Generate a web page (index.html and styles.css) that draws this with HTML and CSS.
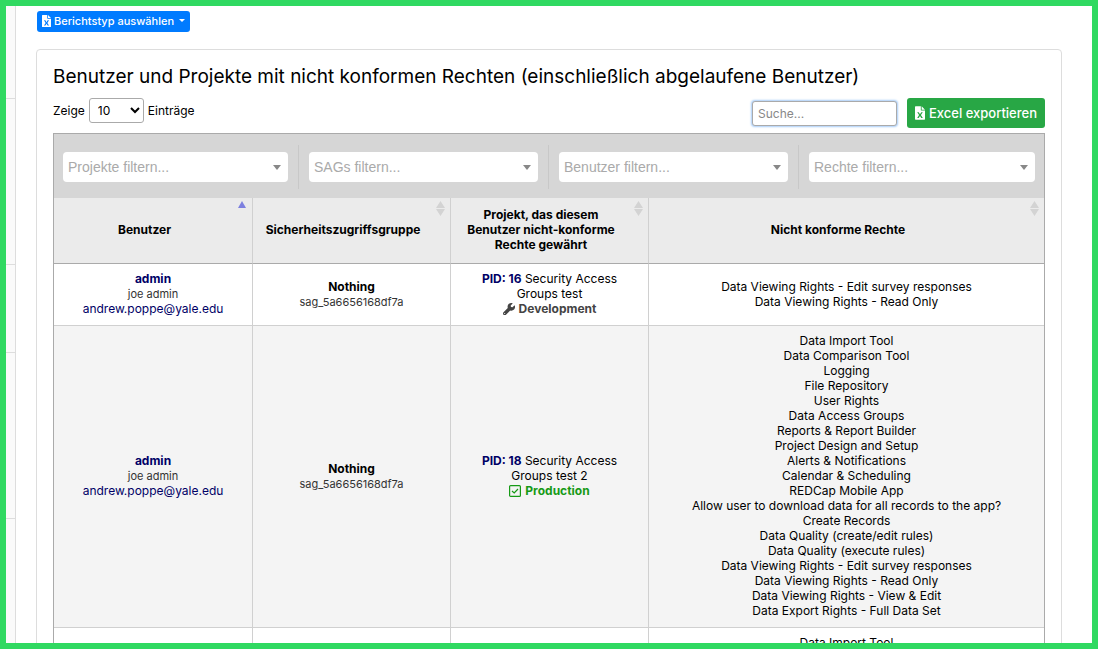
FILE: index.html
```html
<!DOCTYPE html>
<html lang="de">
<head>
<meta charset="utf-8">
<title>Benutzer und Projekte mit nicht konformen Rechten</title>
<link rel="stylesheet" href="styles.css">
</head>
<body>
<svg class="defs" width="0" height="0" aria-hidden="true">
  <symbol id="excel" viewBox="0 0 384 512"><path fill="currentColor" fill-rule="evenodd" d="M0 24Q0 0 24 0H224V136Q224 160 248 160H384V488Q384 512 360 512H24Q0 512 0 488ZM256 0L384 128H256ZM84 224L156 336L84 448H144L192 368L240 448H300L228 336L300 224H240L192 304L144 224Z"/></symbol>
  <symbol id="sort" viewBox="0 0 9 15"><path fill="currentColor" d="M4.500 0L9 7H0ZM0 8H9L4.500 15Z"/></symbol>
</svg>
<aside class="rail"><div class="rail-short"></div><div class="rail-tall"></div><div class="rail-mid"></div><div class="rail-tall"></div></aside>
<main class="main">
  <button type="button" class="btn btn-primary"><svg class="file-icon"><use href="#excel"/></svg><span>Berichtstyp auswählen</span><i class="caret"></i></button>
  <section class="card">
    <h1>Benutzer und Projekte mit nicht konformen Rechten (einschließlich abgelaufene Benutzer)</h1>
    <div class="tools">
      <label class="length">Zeige <select><option>10</option><option>25</option></select> Einträge</label>
      <div class="actions">
        <input type="search" class="search" placeholder="Suche..." aria-label="Suche">
        <button type="button" class="btn btn-success"><svg class="file-icon"><use href="#excel"/></svg><span>Excel exportieren</span></button>
      </div>
    </div>
    <div class="report">
      <div class="filters">
        <div class="filter"><select aria-label="Projekte filtern"><option>Projekte filtern...</option></select></div>
        <div class="filter"><select aria-label="SAGs filtern"><option>SAGs filtern...</option></select></div>
        <div class="filter"><select aria-label="Benutzer filtern"><option>Benutzer filtern...</option></select></div>
        <div class="filter"><select aria-label="Rechte filtern"><option>Rechte filtern...</option></select></div>
      </div>
      <table>
        <thead>
          <tr>
            <th>Benutzer<i class="sort-up"></i></th>
            <th>Sicherheitszugriffsgruppe<svg class="sort"><use href="#sort"/></svg></th>
            <th>Projekt, das diesem Benutzer nicht-konforme Rechte gewährt<svg class="sort"><use href="#sort"/></svg></th>
            <th class="wide">Nicht konforme Rechte<svg class="sort"><use href="#sort"/></svg></th>
          </tr>
        </thead>
        <tbody>
          <tr>
            <td><a href="#" class="strong">admin</a><br><small>joe admin</small><br><a href="#">andrew.poppe@yale.edu</a></td>
            <td><strong>Nothing</strong><br><small>sag_5a6656168df7a</small></td>
            <td class="project"><a href="#" class="strong">PID: 16</a> Security Access Groups test<br><span class="status dev"><svg viewBox="0 0 512 512"><path fill="currentColor" fill-rule="evenodd" d="M507 118C504 106 490 102 481 111L407 185L339 173L328 105L402 31C411 22 407 8 394 5C341-8 282 6 241 47C197 91 184 156 203 212L22 393C-7 422-7 469 22 498C51 527 98 527 127 498L307 318C362 338 425 326 471 280C516 235 520 171 507 118ZM72 472A24 24 0 1 1 72 424A24 24 0 1 1 72 472Z"/></svg>Development</span></td>
            <td>Data Viewing Rights - Edit survey responses<br>Data Viewing Rights - Read Only</td>
          </tr>
          <tr>
            <td><a href="#" class="strong">admin</a><br><small>joe admin</small><br><a href="#">andrew.poppe@yale.edu</a></td>
            <td><strong>Nothing</strong><br><small>sag_5a6656168df7a</small></td>
            <td class="project"><a href="#" class="strong">PID: 18</a> Security Access Groups test 2<br><span class="status prod"><svg viewBox="0 0 12 12"><rect x=".6" y=".6" width="10.800" height="10.800" rx="1" fill="none" stroke="currentColor" stroke-width="1.200"/><path d="M3 6L5.200 8L9 4" fill="none" stroke="currentColor" stroke-width="1.200"/></svg>Production</span></td>
            <td>Data Import Tool<br>Data Comparison Tool<br>Logging<br>File Repository<br>User Rights<br>Data Access Groups<br>Reports &amp; Report Builder<br>Project Design and Setup<br>Alerts &amp; Notifications<br>Calendar &amp; Scheduling<br>REDCap Mobile App<br>Allow user to download data for all records to the app?<br>Create Records<br>Data Quality (create/edit rules)<br>Data Quality (execute rules)<br>Data Viewing Rights - Edit survey responses<br>Data Viewing Rights - Read Only<br>Data Viewing Rights - View &amp; Edit<br>Data Export Rights - Full Data Set</td>
          </tr>
          <tr><td></td><td></td><td></td><td>Data Import Tool</td></tr>
        </tbody>
      </table>
    </div>
  </section>
</main>
</body>
</html>
```
FILE: styles.css
```css
* { box-sizing: border-box; }
body {
  margin: 0;
  height: 100vh;
  overflow: hidden;
  border: 6px solid #30d961;
  display: flex;
  background: #fff;
  color: #000;
  font: 12px/15px Inter, "Noto Sans", sans-serif;
}
.defs { position: absolute; }
.rail { flex: none; width: 10px; background: #fafafa; border-right: 1px solid #ddd; }
.rail div { border-bottom: 1px solid #ddd; }
.rail-short { height: 93px; }
.rail-tall { height: 166px; }
.rail-mid { height: 88px; }
.main { flex: 1; min-width: 0; padding: 5px 30px 0 20px; }
.btn {
  display: inline-flex;
  align-items: center;
  gap: 3px;
  border: 1px solid transparent;
  border-radius: 3px;
  color: #fff;
  font-family: inherit;
  font-weight: 500;
  white-space: nowrap;
}
.btn-primary { display: flex; margin-left: 1px; height: 21px; padding: 0 4px 2px; background: #007bff; font-size: 11px; }
.btn-success { height: 30px; padding: 0 7px 1px; gap: 4px; background: #28a745; font-size: 13px; }
.file-icon { width: 9px; height: 12px; }
.btn-success .file-icon { width: 10px; height: 14px; }
.caret { margin-left: 2px; border: 3px solid transparent; border-top-color: #fff; border-bottom: 0; }
.card { margin-top: 17px; padding: 16px; border: 1px solid #ddd; border-radius: 4px; }
h1 { margin: 0; font-size: 19px; line-height: 22px; font-weight: 400; }
.tools { display: flex; justify-content: space-between; margin-top: 10px; height: 35px; }
.length { display: flex; align-items: center; gap: 4px; height: 25px; }
.length select {
  width: 55px;
  height: 25px;
  padding: 0 4px;
  border: 1px solid #aaa;
  border-radius: 3px;
  background: #fff;
  font: inherit;
}
.actions { display: flex; align-items: center; gap: 10px; height: 30px; }
.search {
  width: 145px;
  height: 25px;
  padding: 0 5px;
  border: 1px solid #aaa;
  border-radius: 3px;
  box-shadow: 0 0 2px 1px #a8cdf8;
  background: #fff;
  font: inherit;
}
.search::placeholder { color: #888; }
.report { border: 1px solid #aaa; }
.filters { display: flex; height: 64px; padding: 11px 9px 9px; background: #d6d6d6; }
.filter {
  position: relative;
  flex: 229 1 0;
  display: flex;
  align-items: center;
  height: 44px;
  padding: 0 10px;
  border-right: 1px solid #c8c8c8;
}
.filter:first-child { flex-grow: 225; padding-left: 0; }
.filter:last-child { flex-grow: 226; padding-right: 0; border-right: 0; }
.filter select {
  appearance: none;
  width: 100%;
  height: 30px;
  padding: 0 5px;
  border: 0;
  border-radius: 4px;
  background: #fff;
  color: #aaa;
  font: 14px "Liberation Sans", Arial, sans-serif;
}
.filter::after {
  content: "";
  position: absolute;
  right: 17px;
  border: 4px solid transparent;
  border-top: 5px solid #888;
  border-bottom: 0;
  pointer-events: none;
}
.filter:last-child::after { right: 7px; }
table { width: 100%; table-layout: fixed; border-collapse: separate; border-spacing: 0; text-align: center; }
th {
  position: relative;
  width: 20%;
  height: 66px;
  padding: 8px 27px 11px 10px;
  background: #ebebeb;
  border-bottom: 1px solid #aaa;
  font-weight: 700;
}
.wide { width: 40%; }
td { padding: 7px 8px 9px; border-bottom: 1px solid #d0d0d0; }
th + th, td + td { border-left: 1px solid #d0d0d0; }
.project { padding: 7px 24px 9px; }
tbody tr:nth-child(even) { background: #f4f4f4; }
.sort { position: absolute; top: 3px; right: 5px; width: 9px; height: 15px; color: #d3d3d3; }
.sort-up { position: absolute; top: 3px; right: 6px; border: 4px solid transparent; border-bottom: 7px solid #7d80df; border-top: 0; }
a { color: #000066; text-decoration: none; }
.strong { font-weight: 700; }
small { font-size: 11px; line-height: 11px; color: #333; }
.status { font-weight: 700; }
.status svg { width: 12px; height: 12px; margin-right: 4px; vertical-align: -2px; }
.dev { color: #444; }
.prod { color: #169a16; }
```
